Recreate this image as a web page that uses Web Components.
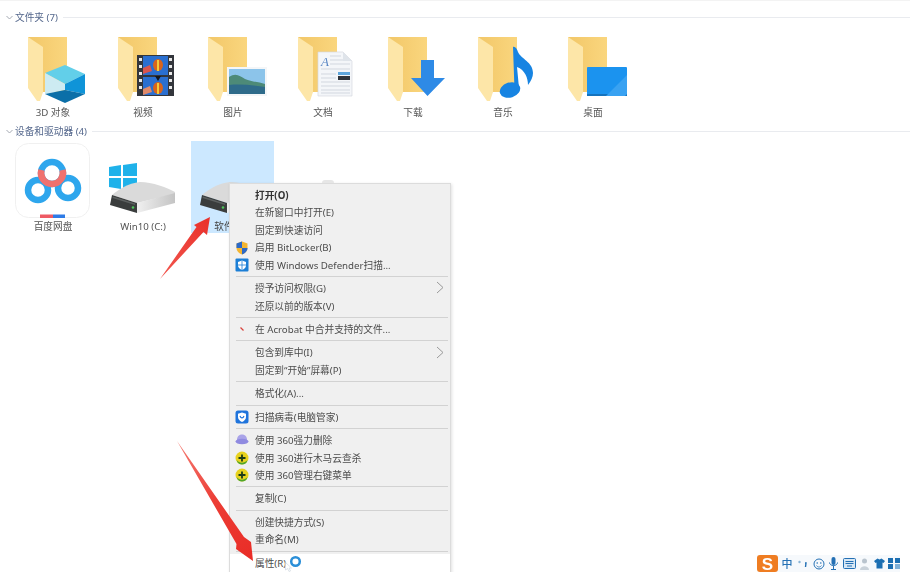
<!DOCTYPE html>
<html lang="zh-CN">
<head>
<meta charset="utf-8">
<title>此电脑</title>
<style>
  html, body { margin: 0; height: 100%; overflow: hidden; background: #fff; }
</style>
</head>
<body>
<fe-window>
  <fe-section title="文件夹 (7)" gap="9">
    <fe-tile label="3D 对象"><fe-folder kind="cube"></fe-folder></fe-tile>
    <fe-tile label="视频"><fe-folder kind="video"></fe-folder></fe-tile>
    <fe-tile label="图片"><fe-folder kind="picture"></fe-folder></fe-tile>
    <fe-tile label="文档"><fe-folder kind="doc"></fe-folder></fe-tile>
    <fe-tile label="下载"><fe-folder kind="download"></fe-folder></fe-tile>
    <fe-tile label="音乐"><fe-folder kind="music"></fe-folder></fe-tile>
    <fe-tile label="桌面"><fe-folder kind="desktop"></fe-folder></fe-tile>
  </fe-section>
  <fe-section title="设备和驱动器 (4)" gap="1">
    <fe-tile label="百度网盘" tall><fe-device kind="baidu"></fe-device></fe-tile>
    <fe-tile label="Win10 (C:)" tall><fe-device kind="system"></fe-device></fe-tile>
    <fe-tile label="软件 (D:)" tall selected><fe-device kind="drive"></fe-device></fe-tile>
  </fe-section>

  <fe-menu>
    <fe-item strong>打开(O)</fe-item>
    <fe-item>在新窗口中打开(E)</fe-item>
    <fe-item>固定到快速访问</fe-item>
    <fe-item icon="uac">启用 BitLocker(B)</fe-item>
    <fe-item icon="defender">使用 Windows Defender扫描...</fe-item>
    <fe-sep></fe-sep>
    <fe-item more>授予访问权限(G)</fe-item>
    <fe-item>还原以前的版本(V)</fe-item>
    <fe-sep></fe-sep>
    <fe-item icon="acrobat">在 Acrobat 中合并支持的文件...</fe-item>
    <fe-sep></fe-sep>
    <fe-item more>包含到库中(I)</fe-item>
    <fe-item>固定到“开始”屏幕(P)</fe-item>
    <fe-sep></fe-sep>
    <fe-item>格式化(A)...</fe-item>
    <fe-sep></fe-sep>
    <fe-item icon="guard">扫描病毒(电脑管家)</fe-item>
    <fe-sep></fe-sep>
    <fe-item icon="shred">使用 360强力删除</fe-item>
    <fe-item icon="s360">使用 360进行木马云查杀</fe-item>
    <fe-item icon="s360">使用 360管理右键菜单</fe-item>
    <fe-sep></fe-sep>
    <fe-item>复制(C)</fe-item>
    <fe-sep></fe-sep>
    <fe-item>创建快捷方式(S)</fe-item>
    <fe-item>重命名(M)</fe-item>
    <fe-sep></fe-sep>
    <fe-item hot>属性(R)</fe-item>
  </fe-menu>

  <fe-arrows></fe-arrows>
  <fe-ime></fe-ime>
</fe-window>

<script>
const FONT = '"Noto Sans", "Noto Sans CJK SC", sans-serif';

/* ── <fe-window> ──────────────────────────────────────────────── */

/** Page root. Holds the sections in flow and the overlays over them. */
class FeWindow extends HTMLElement {
  constructor() {
    super();
    this.attachShadow({ mode: 'open' });
    this.shadowRoot.innerHTML = `
      <style>
        :host {
          position: relative;
          display: flex;
          flex-direction: column;
          box-sizing: border-box;
          width: 910px;
          height: 572px;
          padding: 8px 0 0 8px;
          overflow: hidden;
          box-shadow: inset 0 1px #f3f3f3;
          font: 9.7px/14px ${FONT};
          color: #555;
          filter: blur(0.45px);
        }
      </style>
      <slot></slot>
    `;
  }
}
customElements.define('fe-window', FeWindow);

/* ── <fe-section> ─────────────────────────────────────────────── */

class FeSection extends HTMLElement {
  constructor() {
    super();
    this.attachShadow({ mode: 'open' });
    this.shadowRoot.innerHTML = `
      <style>
        :host { display: block; }
        header {
          display: flex;
          align-items: center;
          gap: 2px;
          height: 18px;
          color: #54678c;
        }
        header span { padding-top: 2px; }
        header svg { flex: none; margin-left: -2px; }
        header i { flex: 1; height: 1px; margin-left: 3px; background: #e9ebef; }
        .tiles { display: flex; }
      </style>
      <header>
        <svg width="7" height="5" viewBox="0 0 7 5"><path d="M.5 1 3.5 4 6.5 1" fill="none" stroke="#a4a9b2"/></svg>
        <span id="t"></span><i></i>
      </header>
      <div class="tiles"><slot></slot></div>
    `;
  }

  connectedCallback() {
    this.shadowRoot.getElementById('t').textContent = this.getAttribute('title');
    this.removeAttribute('title');
    this.shadowRoot.querySelector('.tiles').style.marginTop = `${this.getAttribute('gap') || 0}px`;
  }
}
customElements.define('fe-section', FeSection);

/* ── <fe-tile> ────────────────────────────────────────────────── */

/**
 * Icon with a caption under it.
 * @attr {string} label - Caption.
 * @attr {boolean} tall - Device tile, 92px instead of 87px.
 * @attr {boolean} selected - Draws the blue selection block.
 */
class FeTile extends HTMLElement {
  constructor() {
    super();
    this.attachShadow({ mode: 'open' });
    this.shadowRoot.innerHTML = `
      <style>
        :host {
          display: flex;
          flex-direction: column;
          width: 90px;
          height: 87px;
        }
        :host([tall]) { height: 92px; }
        :host([selected]) {
          background: linear-gradient(#cce8ff, #cce8ff) no-repeat 3px 0 / 83px 100%;
        }
        div { padding-top: 1px; text-align: center; line-height: 14px; white-space: nowrap; }
        :host([selected]) div { color: #444; }
      </style>
      <slot></slot>
      <div></div>
    `;
  }

  connectedCallback() {
    this.shadowRoot.querySelector('div').textContent = this.getAttribute('label');
  }
}
customElements.define('fe-tile', FeTile);

/* ── <fe-folder> ──────────────────────────────────────────────── */

const FOLDER_BADGES = {
  cube: `
    <path d="M37 38 57 30 77 39 57 49Z" fill="#62cfe9"/>
    <path d="M37 38 57 49V55L37 59Z" fill="#cdebf2"/>
    <path d="M57 49 77 39V59L57 55Z" fill="#0f94d8"/>
    <path d="M37 59 57 55 77 59 57 68Z" fill="#0b6fa8"/>`,
  video: `
    <rect x="39" y="20" width="37" height="41" fill="#33363c"/>
    <g fill="#e8e8e8">
      <rect x="41" y="23" width="3" height="3"/><rect x="41" y="30" width="3" height="3"/>
      <rect x="41" y="37" width="3" height="3"/><rect x="41" y="44" width="3" height="3"/>
      <rect x="41" y="51" width="3" height="3"/><rect x="71" y="23" width="3" height="3"/>
      <rect x="71" y="30" width="3" height="3"/><rect x="71" y="37" width="3" height="3"/>
      <rect x="71" y="44" width="3" height="3"/><rect x="71" y="51" width="3" height="3"/>
    </g>
    <rect x="45" y="21" width="25" height="19" fill="#2a6fd0"/>
    <rect x="45" y="42" width="25" height="18" fill="#2a6fd0"/>
    <ellipse cx="60" cy="30" rx="5" ry="6" fill="#d8641c"/><rect x="59" y="25" width="2" height="11" fill="#f2cb3a"/>
    <ellipse cx="60" cy="53" rx="5" ry="6" fill="#d8641c"/><rect x="59" y="48" width="2" height="11" fill="#f2cb3a"/>
    <path d="M45 33 52 30 54 36 45 39Z" fill="#d9554e"/><path d="M45 54 52 51 54 57 45 60Z" fill="#e08a6a"/>
    <path d="M57 41H63L60 46Z" fill="#14161c"/>`,
  picture: `
    <g transform="translate(10 0)">
      <rect x="29" y="32" width="40" height="29" fill="#f4f6f8"/>
      <rect x="31" y="34" width="36" height="25" fill="#8cc4ea"/>
      <path d="M31 42C38 37 42 41 47 44 54 47 61 47 67 49V52H31Z" fill="#4d8a78"/>
      <path d="M31 50C42 49 55 50 67 52V59H31Z" fill="#2f6b8a"/>
    </g>`,
  doc: `
    <g transform="translate(10 0)">
      <path d="M30 17H55L64 26V61H30Z" fill="#f4f6f9" stroke="#d5d9df" stroke-width=".7"/>
      <path d="M55 17V26H64Z" fill="#dfe4ea"/>
      <text x="33" y="31" font-family="Liberation Serif, serif" font-style="italic" font-size="13" fill="#5a87c4">A</text>
      <g stroke="#c3cad4" stroke-width=".7">
        <path d="M42 21H53M42 25H55M42 29H62M33 34H62M33 47H62M33 51H62M33 55H62M33 58H62M33 39H48M33 43H48"/>
      </g>
      <rect x="50" y="37" width="12" height="3" fill="#5fa6dc"/>
      <rect x="50" y="41" width="12" height="4" fill="#30343a"/>
    </g>`,
  download: `
    <path d="M53 25H66V43H77L59.500 61 43 43H53Z" fill="#2e8ae6"/>`,
  music: `
    <g transform="translate(28 0)">
      <ellipse cx="24" cy="55" rx="10.500" ry="7.500" transform="rotate(-18 24 55)" fill="#1784e2"/>
      <path d="M27 12C29 11 31 14 32 17 35 24 47 27 47 38 47 42 45 46 42 50 42 43 39 35 31 32L33 53 28.500 55Z" fill="#1784e2"/>
    </g>`,
  desktop: `
    <g transform="translate(10 0)">
      <rect x="29" y="32" width="40" height="29" rx="1" fill="#1b93ef"/>
      <path d="M29 59H69V61H29Z" fill="#1573bd"/>
      <path d="M48 61 69 40V59L67 61Z" fill="#39a2f2"/>
    </g>`,
};

/**
 * Windows 10 folder with a library badge on it.
 * @attr {keyof FOLDER_BADGES} kind - Which badge to draw.
 */
class FeFolder extends HTMLElement {
  constructor() {
    super();
    this.attachShadow({ mode: 'open' });
  }

  connectedCallback() {
    const kind = this.getAttribute('kind');
    const id = `g-${kind}`;
    this.shadowRoot.innerHTML = `
      <style>
        :host { display: block; width: 90px; height: 70px; }
        svg { display: block; overflow: visible; }
      </style>
      <svg width="90" height="70" viewBox="0 0 90 70">
        <defs>
          <linearGradient id="${id}" x1="0" x2="1" y1="0" y2="0">
            <stop offset="0" stop-color="#f2c768"/><stop offset="1" stop-color="#fad67e"/>
          </linearGradient>
        </defs>
        <path d="M20 2H59V57H28Z" fill="url(#${id})"/>
        <path d="M20 2 35 12V57L32 66 29 66 20 53Z" fill="#fde6a8"/>
        ${FOLDER_BADGES[kind]}
      </svg>
    `;
  }
}
customElements.define('fe-folder', FeFolder);

/* ── <fe-device> ──────────────────────────────────────────────── */

/** Hard disk drawing, shared by the C: and D: tiles. @param {string} id */
function driveSvg(id) {
  return `
    <defs>
      <linearGradient id="${id}" x1="0" x2="1" y1="0" y2="0">
        <stop offset="0" stop-color="#f0f0f0"/><stop offset="1" stop-color="#c4c4c4"/>
      </linearGradient>
    </defs>
    <path d="M14 54C20 49 30 42 42 41 54 41 70 47 77 51V53L39 62Z" fill="#dadada"/>
    <path d="M39 62 77 52V62L39 72Z" fill="url(#${id})"/>
    <path d="M14 54 39 62V72L12 64Z" fill="#3a3d3d"/>
    <path d="M15 55.500 37 62.500V64L14.500 57Z" fill="#5c6060"/>
    <circle cx="35" cy="66.500" r="1.300" fill="#4ec45a"/>`;
}

const DEVICE_ICONS = {
  baidu: `
    <rect x="7.500" y="2.500" width="74" height="74" rx="13" fill="#fff" stroke="#f0f0f0"/>
    <g fill="none" stroke="#2ea6ed" stroke-width="6.500">
      <circle cx="30" cy="49" r="10"/><circle cx="60" cy="47" r="10"/><circle cx="44" cy="32" r="11"/>
    </g>
    <path d="M33.400 29A11 11 0 1 0 54.600 29" fill="none" stroke="#f0716e" stroke-width="6.500"/>
    <rect x="32" y="73.500" width="13" height="3.500" fill="#ee5a64"/>
    <rect x="45" y="73.500" width="12" height="3.500" fill="#2e7be6"/>`,
  system: `
    <g fill="#1fb2ea">
      <path d="M11 26 23 24V35H11Z"/><path d="M25 24 39 22V35H25Z"/>
      <path d="M11 37H23V48L11 46Z"/><path d="M25 37H39V50L25 48Z"/>
    </g>
    ${driveSvg('d-sys')}`,
  drive: driveSvg('d-soft'),
};

/**
 * Device icon.
 * @attr {keyof DEVICE_ICONS} kind - Which drawing to use.
 */
class FeDevice extends HTMLElement {
  constructor() {
    super();
    this.attachShadow({ mode: 'open' });
  }

  connectedCallback() {
    this.shadowRoot.innerHTML = `
      <style>
        :host { display: block; width: 90px; height: 78px; }
        svg { display: block; overflow: visible; }
      </style>
      <svg width="90" height="78" viewBox="0 0 90 78">${DEVICE_ICONS[this.getAttribute('kind')]}</svg>
    `;
  }
}
customElements.define('fe-device', FeDevice);

/* ── <fe-menu> ────────────────────────────────────────────────── */

/** Context menu, cut off by the bottom of the window. */
class FeMenu extends HTMLElement {
  constructor() {
    super();
    this.attachShadow({ mode: 'open' });
    this.shadowRoot.innerHTML = `
      <style>
        :host {
          position: absolute;
          left: 229px;
          top: 183px;
          width: 222px;
          box-sizing: border-box;
          padding: 2px 0;
          background: #f0f0f0;
          border: 1px solid #dcdcdc;
          box-shadow: 1px 1px 3px rgba(0, 0, 0, 0.12);
          color: #4c4c4c;
        }
        /* faint bit of what sits behind the menu, peeking over its top edge */
        :host::before {
          content: "";
          position: absolute;
          left: 92px;
          top: -4px;
          width: 12px;
          height: 3px;
          border-radius: 6px 6px 0 0;
          background: #e6e6e6;
        }
      </style>
      <slot></slot>
    `;
  }
}
customElements.define('fe-menu', FeMenu);

const MENU_ICONS = {
  uac: `
    <path d="M7 .5 12.500 2.500V7C12.500 10 10 12.500 7 13.500 4 12.500 1.500 10 1.500 7V2.500Z" fill="#f3b531"/>
    <path d="M7 .5 1.500 2.500V7H7ZM7 7V13.500C10 12.500 12.500 10 12.500 7Z" fill="#2b69c8"/>`,
  defender: `
    <rect x=".5" y=".5" width="13" height="13" rx="1" fill="#1c7fd6"/>
    <path d="M7 2.500 11 4V7.500C11 9.500 9 11 7 12 5 11 3 9.500 3 7.500V4Z" fill="#fff"/>
    <path d="M7 2.500V12M3 7H11" stroke="#1c7fd6" stroke-width=".8"/>`,
  acrobat: `
    <path d="M5.500 5.500 8.500 8.500" stroke="#d9423c" stroke-width="1.300"/>`,
  guard: `
    <rect x=".5" y=".5" width="13" height="13" rx="2.500" fill="#1f74dc"/>
    <path d="M7 2.500 11 3.800V7C11 9.500 9 11 7 12 5 11 3 9.500 3 7V3.800Z" fill="#fff"/>
    <path d="M5 6C6 8.500 8 8.500 9 6" fill="none" stroke="#1f74dc" stroke-width="1.200"/>`,
  shred: `
    <path d="M2 7C2 3 4.500 1.500 7 1.500S12 3 12 7Z" fill="#a9a3e8"/>
    <ellipse cx="7" cy="8.500" rx="6.500" ry="2.800" fill="#8f8ae0"/>`,
  s360: `
    <circle cx="7" cy="7" r="6.500" fill="#e8d21f"/>
    <path d="M1.500 9C4 12 9 13 12.500 9 12 12 9.500 13.500 7 13.500 4.500 13.500 2.500 12 1.500 9Z" fill="#4ea52b"/>
    <path d="M7 3.500V10.500M3.500 7H10.500" stroke="#1c3b18" stroke-width="1.800"/>`,
};

/**
 * One menu row.
 * @attr {keyof MENU_ICONS} icon - Optional icon at the left.
 * @attr {boolean} strong - Default action, in bold.
 * @attr {boolean} more - Has a submenu chevron.
 * @attr {boolean} hot - Row under the pointer, white with a busy ring.
 */
class FeItem extends HTMLElement {
  constructor() {
    super();
    this.attachShadow({ mode: 'open' });
  }

  connectedCallback() {
    const icon = MENU_ICONS[this.getAttribute('icon')];
    this.shadowRoot.innerHTML = `
      <style>
        :host {
          display: flex;
          align-items: center;
          box-sizing: border-box;
          height: 17.5px;
          padding: 2px 0 0 25px;
          white-space: nowrap;
          position: relative;
        }
        :host([strong]) { font-weight: 700; color: #333; }
        :host([hot]) { background: #fff; height: 20px; align-items: flex-start; padding-top: 3px; }
        .icon { position: absolute; left: 5px; top: 2px; }
        .more { position: absolute; right: 6px; top: 2px; }
        .ring { margin: -2px 0 0 3px; }
        .pointer { position: absolute; left: 55px; top: 8px; }
      </style>
      ${icon ? `<svg class="icon" width="14" height="14" viewBox="0 0 14 14">${icon}</svg>` : ''}
      <slot></slot>
      ${this.hasAttribute('more') ? `<svg class="more" width="8" height="13" viewBox="0 0 8 13"><path d="M1 1 7 6.500 1 12" fill="none" stroke="#9a9a9a"/></svg>` : ''}
      ${this.hasAttribute('hot') ? `
        <svg class="ring" width="13" height="13" viewBox="0 0 13 13"><circle cx="6.500" cy="6.500" r="4.300" fill="none" stroke="#2b8fd8" stroke-width="2.500"/></svg>
        <svg class="pointer" width="7" height="10" viewBox="0 0 7 10"><path d="M.5.5V8L2.500 6.500 4 9.500 5.500 9 4 6H6.500Z" fill="#fff" stroke="#c9d3dc" stroke-width=".6"/></svg>` : ''}
    `;
  }
}
customElements.define('fe-item', FeItem);

/** Separator line between menu groups. */
class FeSep extends HTMLElement {
  constructor() {
    super();
    this.attachShadow({ mode: 'open' });
    this.shadowRoot.innerHTML = `
      <style>
        :host { display: flex; align-items: center; height: 5.9px; padding: 0 2px 0 6px; }
        i { flex: 1; height: 1px; background: #d2d2d2; }
      </style>
      <i></i>
    `;
  }
}
customElements.define('fe-sep', FeSep);

/* ── <fe-arrows> ──────────────────────────────────────────────── */

/** The two red arrows of the tutorial, drawn over everything else. */
class FeArrows extends HTMLElement {
  constructor() {
    super();
    this.attachShadow({ mode: 'open' });
    this.shadowRoot.innerHTML = `
      <style>
        :host { position: absolute; inset: 0; pointer-events: none; }
        svg { display: block; }
      </style>
      <svg width="910" height="572" viewBox="0 0 910 572">
        <defs>
          <linearGradient id="a1" gradientUnits="userSpaceOnUse" x1="160" y1="279" x2="210" y2="217">
            <stop offset="0" stop-color="#f2574f"/><stop offset="1" stop-color="#e9302a"/>
          </linearGradient>
          <linearGradient id="a2" gradientUnits="userSpaceOnUse" x1="178" y1="441" x2="252" y2="561">
            <stop offset="0" stop-color="#f57b72"/><stop offset=".5" stop-color="#ec3d35"/><stop offset="1" stop-color="#e92c26"/>
          </linearGradient>
        </defs>
        <path d="M160 279 196.500 227 194 225 210 217 207 235 203.500 232Z" fill="url(#a1)"/>
        <path d="M177 441 244 537 251 542 253 561 236 549 236.500 544Z" fill="url(#a2)"/>
      </svg>
    `;
  }
}
customElements.define('fe-arrows', FeArrows);

/* ── <fe-ime> ─────────────────────────────────────────────────── */

/** Input method toolbar in the bottom-right corner. */
class FeIme extends HTMLElement {
  constructor() {
    super();
    this.attachShadow({ mode: 'open' });
    this.shadowRoot.innerHTML = `
      <style>
        :host {
          position: absolute;
          right: 10px;
          bottom: 0;
          display: flex;
          align-items: center;
          gap: 3.5px;
          height: 17px;
          color: #2470b4;
          background: #f6f9fc;
        }
        svg { display: block; flex: none; }
        span { font: 500 11px/17px "Noto Sans CJK SC", sans-serif; width: 12px; }
      </style>
      <svg width="21" height="17" viewBox="0 0 21 17">
        <rect x="0" y="0" width="21" height="17" rx="3" fill="#ef7d22"/>
        <text x="10.500" y="14.500" text-anchor="middle" fill="#fff" font-family="Liberation Sans, sans-serif" font-weight="700" font-size="17">S</text>
      </svg>
      <span>中</span>
      <svg width="12" height="12" viewBox="0 0 12 12"><circle cx="2.500" cy="4" r="1.200" fill="#8ab4d6"/><path d="M8 5 9 5 8.500 9" stroke="#2470b4" stroke-width="1.400" fill="none"/></svg>
      <svg width="12" height="12" viewBox="0 0 12 12"><circle cx="6" cy="6" r="5" fill="none" stroke="#2470b4"/><circle cx="4.200" cy="5" r=".8" fill="#2470b4"/><circle cx="7.800" cy="5" r=".8" fill="#2470b4"/><path d="M3.500 7.500C5 9.500 7 9.500 8.500 7.500" fill="none" stroke="#2470b4" stroke-width=".8"/></svg>
      <svg width="11" height="13" viewBox="0 0 11 13"><rect x="3.500" y="0" width="4" height="8" rx="2" fill="#2470b4"/><path d="M1.500 5.500C1.500 9.500 9.500 9.500 9.500 5.500M5.500 8.500V12M3 12.500H8" fill="none" stroke="#2470b4"/></svg>
      <svg width="13" height="11" viewBox="0 0 13 11"><rect x=".5" y=".5" width="12" height="10" rx="1" fill="#d8e8f5" stroke="#2470b4"/><path d="M2.500 3.500H10.500M2.500 5.500H10.500M4 8H9" stroke="#2470b4"/></svg>
      <svg width="11" height="12" viewBox="0 0 11 12"><circle cx="5.500" cy="3" r="2.500" fill="#b9c4ce"/><path d="M1 12C1 7 10 7 10 12Z" fill="#c9d2da"/></svg>
      <svg width="11" height="11" viewBox="0 0 11 11"><path d="M3.500 .5 5.500 1.500 7.500 .5 11 3 9.500 5 8.500 4.500V10.500H2.500V4.500L1.500 5 0 3Z" fill="#1c6fb2"/></svg>
      <svg width="12" height="11" viewBox="0 0 12 11"><path d="M0 0H5V5H0ZM7 0H12V5H7ZM0 6H5V11H0Z" fill="#1c6fb2"/><path d="M7 6H12V11H7Z" fill="#7eb0d8"/></svg>
    `;
  }
}
customElements.define('fe-ime', FeIme);
</script>
</body>
</html>
